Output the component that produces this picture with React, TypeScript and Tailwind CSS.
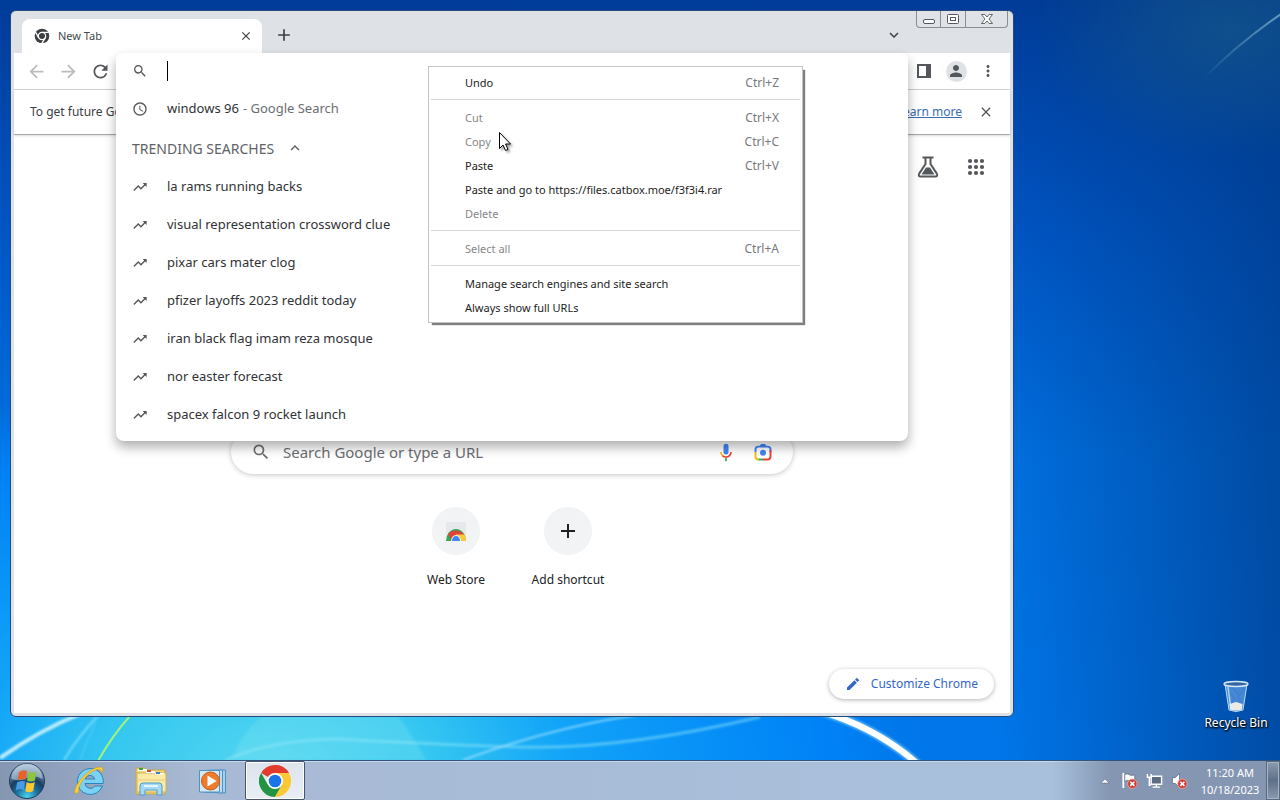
import { ReactNode } from 'react';
import {
  MdAdd,
  MdArrowBack,
  MdArrowForward,
  MdClose,
  MdEdit,
  MdExpandLess,
  MdExpandMore,
  MdMoreVert,
  MdPerson,
  MdRefresh,
  MdSchedule,
  MdSearch,
  MdTrendingUp,
} from 'react-icons/md';

const TRENDING = [
  'la rams running backs',
  'visual representation crossword clue',
  'pixar cars mater clog',
  'pfizer layoffs 2023 reddit today',
  'iran black flag imam reza mosque',
  'nor easter forecast',
  'spacex falcon 9 rocket launch',
];

interface MenuEntry {
  label: string;
  shortcut?: string;
  disabled?: boolean;
}

// One inner array per group, groups are split by a separator line
const MENU: MenuEntry[][] = [
  [{ label: 'Undo', shortcut: 'Ctrl+Z' }],
  [
    { label: 'Cut', shortcut: 'Ctrl+X', disabled: true },
    { label: 'Copy', shortcut: 'Ctrl+C', disabled: true },
    { label: 'Paste', shortcut: 'Ctrl+V' },
    { label: 'Paste and go to https://files.catbox.moe/f3f3i4.rar' },
    { label: 'Delete', disabled: true },
  ],
  [{ label: 'Select all', shortcut: 'Ctrl+A', disabled: true }],
  [{ label: 'Manage search engines and site search' }, { label: 'Always show full URLs' }],
];

function Wallpaper() {
  return (
    <svg className="absolute inset-0 h-full w-full" viewBox="0 0 1280 760" preserveAspectRatio="none" aria-hidden="true">
      <defs>
        <linearGradient id="sky" x1="0" y1="0" x2="0" y2="1">
          <stop offset="0" stopColor="#003b98" />
          <stop offset="0.3" stopColor="#0055c4" />
          <stop offset="0.6" stopColor="#0070e0" />
          <stop offset="1" stopColor="#0076ea" />
        </linearGradient>
        <radialGradient id="glow" gradientUnits="userSpaceOnUse" cx="0" cy="0" r="1" gradientTransform="translate(270 770) scale(660 400)">
          <stop offset="0" stopColor="#54d6f0" />
          <stop offset="0.24" stopColor="#36c8f0" />
          <stop offset="0.45" stopColor="#12a4f8" />
          <stop offset="0.85" stopColor="#0088fc" stopOpacity="0.7" />
          <stop offset="1" stopColor="#0082f4" stopOpacity="0" />
        </radialGradient>
        <linearGradient id="shade" x1="0" y1="0" x2="1" y2="0">
          <stop offset="0.78" stopColor="#003a88" stopOpacity="0" />
          <stop offset="1" stopColor="#003a88" stopOpacity="0.7" />
        </linearGradient>
        <radialGradient id="teal" gradientUnits="userSpaceOnUse" cx="0" cy="0" r="1" gradientTransform="translate(1230 30) scale(200 130)">
          <stop offset="0" stopColor="#1a5c88" stopOpacity="0.6" />
          <stop offset="1" stopColor="#1a5c88" stopOpacity="0" />
        </radialGradient>
        <linearGradient id="ray" x1="1" y1="0" x2="0" y2="1">
          <stop offset="0" stopColor="#6fa4c8" stopOpacity="0.9" />
          <stop offset="1" stopColor="#6fa4c8" stopOpacity="0" />
        </linearGradient>
        <filter id="soft" x="-20%" y="-20%" width="140%" height="140%">
          <feGaussianBlur stdDeviation="1" />
        </filter>
      </defs>
      <rect width="1280" height="760" fill="url(#sky)" />
      <rect width="1280" height="760" fill="url(#glow)" />
      <rect width="1280" height="760" fill="url(#shade)" />
      <rect width="1280" height="760" fill="url(#teal)" />
      <path d="M1204 78 Q1240 42 1281 14" fill="none" stroke="url(#ray)" strokeWidth="2" />
      <g fill="none" filter="url(#soft)">
        <path d="M0 758 Q40 730 80 714" stroke="#bdeeff" strokeWidth="4" />
        <path d="M64 760 Q80 734 98 716" stroke="#6fdcff" strokeWidth="2" />
        <path d="M80 760 Q88 738 96 722" stroke="#5cd0fa" strokeWidth="1" />
        <path d="M226 760 Q270 740 340 739 Q420 744 520 747 T760 717" stroke="#8be6fa" strokeWidth="3" opacity="0.5" />
        <path d="M463 760 Q550 728 636 715" stroke="#8fdcff" strokeWidth="2" opacity="0.8" />
        <path d="M232 760 Q238 738 262 716 H398 Q414 738 426 760 Z" fill="#9df0f4" opacity="0.2" />
      </g>
      <path d="M98 761 Q112 736 130 716" fill="none" stroke="#9cf57c" strokeWidth="2" />
      <path d="M820 711 Q878 728 920 766" fill="none" stroke="#a8e4ff" strokeWidth="9" opacity="0.6" filter="url(#soft)" />
      <path d="M820 711 Q878 728 920 766" fill="none" stroke="#fff" strokeWidth="6" />
    </svg>
  );
}

function ChromeLogo({ className }: { className: string }) {
  return (
    <svg className={className} viewBox="0 0 48 48" aria-hidden="true">
      <path d="M24 24 3.2 12A24 24 0 0 1 44.8 12L24 12Z" fill="#e33b2e" />
      <path d="M24 0A24 24 0 0 1 44.8 12H24Z" fill="#e33b2e" />
      <path d="M3.2 12A24 24 0 0 0 24 48L34.4 30 24 24 13.6 30Z" fill="#229342" />
      <path d="M44.8 12A24 24 0 0 1 24 48L34.4 30 24 12Z" fill="#fcc934" />
      <circle cx="24" cy="24" r="12" fill="#fff" />
      <circle cx="24" cy="24" r="9.5" fill="#1a73e8" />
    </svg>
  );
}

function GreyChromeLogo() {
  return (
    <svg className="size-4" viewBox="0 0 48 48" aria-hidden="true">
      <circle cx="24" cy="24" r="22" fill="#3c4043" />
      <g stroke="#fff" strokeWidth="4" fill="none">
        <path d="M24 13H46M14.5 29.5 3.5 10.5M33.5 29.5 22.5 48.5" />
        <circle cx="24" cy="24" r="11" />
      </g>
      <circle cx="24" cy="24" r="6.5" fill="#3c4043" />
    </svg>
  );
}

function IconButton({ label, children, className = '' }: { label: string; children: ReactNode; className?: string }) {
  return (
    <button aria-label={label} className={`flex size-7 shrink-0 items-center justify-center rounded-full text-[#54575b] ${className}`}>
      {children}
    </button>
  );
}

function WindowControls() {
  return (
    <div className="mr-0.5 flex h-[17px] rounded-b border border-t-0 border-[#8b8e93] bg-[#dfe2e6] text-[#54585e]">
      <button aria-label="Minimize" className="flex w-6 items-center justify-center border-r border-[#8b8e93]">
        <svg className="h-3 w-3.5" viewBox="0 0 14 12" fill="#fff" stroke="currentColor">
          <rect x="1.5" y="6.5" width="11" height="4" rx="1.5" />
        </svg>
      </button>
      <button aria-label="Restore" className="flex w-[25px] items-center justify-center border-r border-[#8b8e93]">
        <svg className="h-3 w-3.5" viewBox="0 0 14 12" fill="#fff" stroke="currentColor">
          <rect x="1.5" y="1.5" width="11" height="9" rx="1" />
          <rect x="4.5" y="4.5" width="5" height="3" />
        </svg>
      </button>
      <button aria-label="Close window" className="flex w-[41px] items-center justify-center">
        <svg className="h-3 w-3.5" viewBox="0 0 14 12" fill="#fff" stroke="currentColor" strokeWidth="0.9">
          <path d="M1.5 1.5H4.8L7 4 9.2 1.5H12.5L9 6 12.5 10.5H9.2L7 8 4.8 10.5H1.5L5 6Z" />
        </svg>
      </button>
    </div>
  );
}

function TitleBar() {
  return (
    <div className="flex h-[42px] shrink-0 items-start">
      <div className="flex min-w-0 flex-1 items-end self-stretch pl-2">
        <div className="flex h-[34px] w-60 items-center rounded-t-lg bg-white pr-2 pl-3">
          <GreyChromeLogo />
          <span className="flex-1 pl-2 text-[11px] text-[#45494d]">New Tab</span>
          <button aria-label="Close tab" className="flex size-4 items-center justify-center text-[#3c4043]">
            <MdClose className="size-3.5" />
          </button>
        </div>
        <IconButton label="New tab" className="mb-1 ml-2">
          <MdAdd className="size-5 text-[#3c4043]" />
        </IconButton>
        <IconButton label="Search tabs" className="mr-2 mb-1 ml-auto">
          <MdExpandMore className="size-[18px] text-[#3c4043]" />
        </IconButton>
      </div>
      <WindowControls />
    </div>
  );
}

function Toolbar() {
  return (
    <div className="flex h-[37px] shrink-0 items-center gap-1 border-b border-[#d0d2d4] bg-white px-2">
      <IconButton label="Back">
        <MdArrowBack className="size-[21px] text-[#b9bbbe]" />
      </IconButton>
      <IconButton label="Forward">
        <MdArrowForward className="size-[21px] text-[#b9bbbe]" />
      </IconButton>
      <IconButton label="Reload">
        <MdRefresh className="size-[21px]" />
      </IconButton>
      <div className="flex-1" />
      <IconButton label="Side panel">
        <svg className="size-4" viewBox="0 0 16 16" fill="none" stroke="currentColor" strokeWidth="2">
          <rect x="2" y="2" width="12" height="12" />
          <path d="M12 2V14" strokeWidth="4" />
        </svg>
      </IconButton>
      <IconButton label="Profile">
        <span className="flex size-[21px] items-center justify-center rounded-full bg-[#dee1e6]">
          <MdPerson className="size-[18px]" />
        </span>
      </IconButton>
      <IconButton label="Menu">
        <MdMoreVert className="size-[18px]" />
      </IconButton>
    </div>
  );
}

function InfoBar() {
  return (
    <div className="z-10 flex h-[45px] shrink-0 items-center border-b border-[#a8a8a8] bg-white px-4 text-[12px] text-[#3c4043] shadow">
      <span>To get future Google</span>
      <a href="#learn" className="ml-auto shrink-0 text-[#3a6cae] underline">
        Learn more
      </a>
      <button aria-label="Dismiss" className="ml-4 text-[#54575b]">
        <MdClose className="size-4" />
      </button>
    </div>
  );
}

function MicIcon() {
  return (
    <svg className="size-5" viewBox="0 0 24 24" aria-hidden="true">
      <path d="M12 15a3 3 0 0 0 3-3V5a3 3 0 0 0-6 0v7a3 3 0 0 0 3 3Z" fill="#4285f4" />
      <path d="M11 18.9h2V23h-2Z" fill="#34a853" />
      <path d="M7 12H5c0 1.9.8 3.7 2 5l1.5-1.4A5 5 0 0 1 7 12Z" fill="#fbbc04" />
      <path d="M12 17a5 5 0 0 1-3.6-1.5L7 17a7 7 0 0 0 5 2c3.9 0 7-3.1 7-7h-2a5 5 0 0 1-5 5Z" fill="#ea4335" />
    </svg>
  );
}

function LensIcon() {
  return (
    <svg className="size-5" viewBox="0 0 24 24" fill="none" strokeWidth="2.3" aria-hidden="true">
      <path d="M3 12V9a3.5 3.5 0 0 1 3.5-3.5H17.5A3.5 3.5 0 0 1 21 9V12" stroke="#4285f4" />
      <path d="M8 5 9.5 2.5H14.5L16 5Z" fill="#4285f4" />
      <path d="M21 10V17.5a3.5 3.5 0 0 1-3.5 3.5H12" stroke="#ea4335" />
      <path d="M3 12V17.5A3.5 3.5 0 0 0 6.5 21" stroke="#fbbc04" />
      <path d="M6.5 21H12" stroke="#34a853" />
      <circle cx="12" cy="13" r="3.6" fill="#4285f4" />
    </svg>
  );
}

function Shortcut({ label, children }: { label: string; children: ReactNode }) {
  return (
    <button className="flex w-28 flex-col items-center gap-[17px] text-[12px] text-[#202124]">
      <span className="flex size-12 items-center justify-center rounded-full bg-[#f1f3f4]">{children}</span>
      <span className="leading-4">{label}</span>
    </button>
  );
}

function NewTabPage() {
  return (
    <main className="flex min-h-0 flex-1 flex-col items-center bg-white">
      <div className="flex h-16 items-center gap-2 self-end pr-3.5 text-[#54575b]">
        <button aria-label="Search Labs" className="flex size-10 items-center justify-center">
          <svg className="size-6" viewBox="0 0 24 24" fill="none" stroke="currentColor" strokeWidth="2">
            <path d="M6.5 2.5H17.5M9.5 3V9L3.2 18.6C2.2 20.5 3 21.5 4.6 21.5H19.4C21 21.5 21.8 20.5 20.8 18.6L14.5 9V3" />
            <path d="M10 12.5H14L18.5 19.5H5.5Z" fill="currentColor" stroke="none" />
          </svg>
        </button>
        <button aria-label="Google apps" className="flex size-10 items-center justify-center">
          <svg className="size-6" viewBox="0 0 24 24" fill="currentColor">
            {[6, 12, 18].map((y) => [6, 12, 18].map((x) => <circle key={`${x}-${y}`} cx={x} cy={y} r="2.1" />))}
          </svg>
        </button>
      </div>
      <label className="mt-[231px] flex h-11 w-full max-w-[562px] items-center rounded-full bg-white px-5 shadow-[0_1px_5px_rgba(32,33,36,0.25)]">
        <MdSearch className="size-5 text-[#6b6e72]" />
        <input
          aria-label="Search Google or type a URL"
          placeholder="Search Google or type a URL"
          className="ml-3 min-w-0 flex-1 text-[15px] outline-none placeholder:text-[#6b6e72]"
        />
        <MicIcon />
        <span className="ml-[17px]">
          <LensIcon />
        </span>
      </label>
      <div className="mt-[33px] flex">
        <Shortcut label="Web Store">
          <svg className="size-6" viewBox="0 0 24 24" aria-hidden="true">
            <path d="M2 3H22V19H2Z" fill="#e6e8eb" />
            <path d="M2 22a10 12 0 0 1 20 0Z" fill="#34a853" />
            <path d="M4 15a10 9 0 0 1 16.5 1L12 17 8 22Z" fill="#db4437" />
            <path d="M12 15.5H20.3A10 12 0 0 1 22 22H12Z" fill="#fbc934" />
            <path d="M7 22a5 6 0 0 1 10 0Z" fill="#f1f3f4" />
            <path d="M8 22a4 5 0 0 1 8 0Z" fill="#4285f4" />
          </svg>
        </Shortcut>
        <Shortcut label="Add shortcut">
          <MdAdd className="size-6" />
        </Shortcut>
      </div>
      <button className="mt-auto mr-4 mb-3.5 flex h-[30px] items-center gap-2.5 self-end rounded-full bg-white px-4 text-[12px] text-[#3367c8] shadow-[0_1px_4px_rgba(60,64,67,0.4)]">
        <MdEdit className="size-4" />
        Customize Chrome
      </button>
    </main>
  );
}

function Omnibox() {
  return (
    <div className="absolute top-[42px] right-[105px] left-[105px] z-20 overflow-hidden rounded-lg bg-white pb-2 text-[13px] text-[#303235] shadow-[0_6px_12px_rgba(0,0,0,0.32)]">
      <div className="flex h-9 items-center pl-4">
        <MdSearch className="size-4 text-[#54575b]" />
        <span className="ml-[19px] h-5 w-px bg-black" />
        <input aria-label="Address and search bar" autoComplete="off" className="min-w-0 flex-1 outline-none" />
      </div>
      <button className="flex h-[38px] w-full items-center pt-0.5 pl-4 text-left">
        <MdSchedule className="mr-[19px] size-4 text-[#54575b]" />
        <span>windows 96</span>
        <span className="ml-1 text-[#6b6e72]">- Google Search</span>
      </button>
      <button className="flex h-10 w-full items-center gap-3 pt-0.5 pl-4 text-[14px] text-[#5f6368]">
        TRENDING SEARCHES
        <MdExpandLess className="size-[18px]" />
      </button>
      {TRENDING.map((text) => (
        <button key={text} className="flex h-[38px] w-full items-center pt-0.5 pl-4 text-left">
          <MdTrendingUp className="mr-[19px] size-4 text-[#54575b]" />
          <span>{text}</span>
        </button>
      ))}
    </div>
  );
}

function ContextMenu() {
  return (
    <div className="absolute top-[66px] left-[428px] z-30 w-[375px] border border-[#c4c4c4] bg-white px-0.5 pt-1 pb-0.5 text-[#1d1d1d] shadow-[3px_3px_1px_-1px_rgba(0,0,0,0.5)]">
      {MENU.map((group, i) => (
        <div key={i}>
          {i > 0 && <hr className="mt-1 mb-1.5 border-[#d5d5d5]" />}
          {group.map((item) => (
            <button
              key={item.label}
              disabled={item.disabled}
              className="flex h-6 w-full items-center justify-between pr-[21px] pl-[34px] text-[11px] disabled:text-[#85878a]"
            >
              <span>{item.label}</span>
              {item.shortcut && <span className="text-[12px] text-[#77797c]">{item.shortcut}</span>}
            </button>
          ))}
        </div>
      ))}
    </div>
  );
}

function Cursor() {
  return (
    <svg className="absolute top-[131px] left-[498px] z-40 h-[21px] w-[15px] drop-shadow-[2px_2px_1px_rgba(0,0,0,0.35)]" viewBox="0 0 15 21" aria-hidden="true">
      <path d="M1.5 1.5V17.5L5 14L7.5 19.5L10 18.4L7.6 13H12.5Z" fill="#fff" stroke="#000" />
    </svg>
  );
}

function RecycleBin() {
  return (
    <button className="absolute right-1 bottom-7 flex w-20 flex-col items-center text-[12px] text-white [text-shadow:0_1px_2px_#000,1px_1px_2px_#000]">
      <svg className="h-9 w-8" viewBox="0 0 32 36" aria-hidden="true">
        <path d="M5 6 9 32Q16 35 23 32L27 6Z" fill="#5f9be0" fillOpacity="0.75" stroke="#b9dbf8" />
        <path d="M9.5 26 16 24 22.5 26 22 31.5Q16 33.5 10 31.5Z" fill="#ecece6" />
        <path d="M8 12 14 20 11 25M24 11 18 19 22 25M13 10 19 17" fill="none" stroke="#3c7fd0" strokeWidth="1.2" />
        <ellipse cx="16" cy="6" rx="12" ry="2.5" fill="#34679f" stroke="#d4e8f6" strokeWidth="1.5" />
        <path d="M8 9 11 31" stroke="#e0f1ff" strokeWidth="1.5" opacity="0.7" />
      </svg>
      <span className="whitespace-nowrap">Recycle Bin</span>
    </button>
  );
}

function StartOrb() {
  return (
    <svg className="size-[38px]" viewBox="0 0 38 38" aria-hidden="true">
      <defs>
        <radialGradient id="orb" cx="0.5" cy="0.95" r="0.9">
          <stop offset="0" stopColor="#4cd4ee" />
          <stop offset="0.35" stopColor="#1b6fa0" />
          <stop offset="0.6" stopColor="#1a3d63" />
          <stop offset="1" stopColor="#9fb8cf" />
        </radialGradient>
      </defs>
      <circle cx="19" cy="19" r="17.5" fill="url(#orb)" stroke="#223c58" />
      <path d="M3.5 17A15.5 15.5 0 0 1 34.5 17Q26 12 19 16T3.5 17Z" fill="#c8dbea" opacity="0.55" />
      <path d="M11 10Q15 7 19 9L17.5 18Q13 16 9.5 18.5Z" fill="#e8622a" />
      <path d="M20.5 9.5Q24 12 28.5 9.5L27 18.5Q23 20.5 19 18.5Z" fill="#8cc63f" />
      <path d="M9 20.5Q13 18 17 19.5L15.8 28Q12 26 7.8 28.5Z" fill="#4a9be6" />
      <path d="M18.7 20Q22.5 22.5 26.8 20L25.2 29Q21 31.5 17.3 29Z" fill="#fdc72f" />
    </svg>
  );
}

function InternetExplorerIcon() {
  return (
    <svg className="size-8" viewBox="0 0 32 32" aria-hidden="true">
      <path
        d="M17 3.5A13 13 0 1 0 29.5 21H22A5.5 5.5 0 0 1 12 18.5H30.2A13 13 0 0 0 17 3.5ZM12.2 14A5 5 0 0 1 21.8 14Z"
        fill="#7cd2f2"
        stroke="#2a84bd"
      />
      <path d="M6 27C-1 32 1 22 9 13S27 0 29.5 3C30.5 4.5 29.5 7 28.5 8.5C29 4 25 3 18 7.5S4 22 6 27Z" fill="#fcd03c" stroke="#c99a18" strokeWidth="0.6" />
    </svg>
  );
}

function ExplorerIcon() {
  return (
    <svg className="size-8" viewBox="0 0 32 32" aria-hidden="true">
      <path d="M1 3H10L12 5H30V29H1Z" fill="#efd779" stroke="#c7a547" />
      <path d="M2 8H31V27H2Z" fill="#faeaa6" stroke="#d0b25a" />
      <path d="M3 4H12V6H3ZM11 6H20V8H11ZM20 8H29V9.5H20Z" fill="#fff" />
      <path d="M4 3H8V5H4Z" fill="#3fa14a" />
      <path d="M12 5H16V7H12Z" fill="#d54a35" />
      <path d="M21 7H25V9H21Z" fill="#3c80c8" />
      <path d="M3 15H30" stroke="#e3cc80" />
      <path d="M5 30V21Q5 18 8 18H24Q27 18 27 21V30H22V25H10V30Z" fill="#a5d8f2" stroke="#4c9dcc" />
      <path d="M9 21H23" stroke="#e3f5ff" strokeWidth="2" />
    </svg>
  );
}

function MediaPlayerIcon() {
  return (
    <svg className="h-7 w-8" viewBox="0 0 32 28" aria-hidden="true">
      <path d="M9 3.5 28.5 3V26L9 25Z" fill="#a8d0ea" stroke="#4e93c4" />
      <path d="M6 3.5 25.5 3V26L6 25Z" fill="#bcdcf0" stroke="#4e93c4" />
      <path d="M2.5 3.5H22.5V25H2.5Z" fill="#d4e9f6" stroke="#4e93c4" />
      <circle cx="13.5" cy="14" r="9" fill="#ef7c2c" stroke="#c85c14" />
      <path d="M10.5 8.5V19.5L19.5 14Z" fill="#fff" />
    </svg>
  );
}

function TaskButton({ label, active = false, children }: { label: string; active?: boolean; children: ReactNode }) {
  return (
    <button
      aria-label={label}
      className={`flex w-[60px] items-center justify-center ${
        active ? 'rounded-xs border border-[#46566c] bg-linear-to-b from-[#dde4ec] to-[#e9eef5] shadow-[inset_0_0_0_1px_#fff]' : ''
      }`}
    >
      {children}
    </button>
  );
}

function RedCross() {
  return (
    <g>
      <circle cx="12" cy="12.5" r="5" fill="#d23a30" stroke="#f2b3ac" strokeWidth="0.8" />
      <path d="M9.8 10.3 14.2 14.7M14.2 10.3 9.8 14.7" stroke="#fff" strokeWidth="1.8" />
    </g>
  );
}

function Taskbar() {
  return (
    <footer className="relative z-10 flex h-10 shrink-0 border-t border-[#33557d] bg-linear-to-r from-[#8496b2] from-0% via-[#a8b9d4] via-15% to-[#a8c2de] shadow-[inset_0_1px_0_#c5d8ec]">
      <button aria-label="Start" className="flex w-[54px] items-center justify-center">
        <StartOrb />
      </button>
      <div className="ml-[5px] flex gap-0.5">
        <TaskButton label="Internet Explorer">
          <InternetExplorerIcon />
        </TaskButton>
        <TaskButton label="Windows Explorer">
          <ExplorerIcon />
        </TaskButton>
        <TaskButton label="Windows Media Player">
          <MediaPlayerIcon />
        </TaskButton>
        <TaskButton label="Google Chrome" active>
          <ChromeLogo className="size-8" />
        </TaskButton>
      </div>
      <div className="ml-auto flex items-center bg-linear-to-r from-transparent to-[#8496b2] to-25% pl-10">
        <button aria-label="Show hidden icons" className="flex w-6 justify-center">
          <svg className="h-2 w-2.5" viewBox="0 0 10 8">
            <path d="M1 6H9L5 2Z" fill="#fff" stroke="#55657c" strokeWidth="0.5" />
          </svg>
        </button>
        <div className="ml-1 flex gap-2">
          <svg className="size-[17px]" viewBox="0 0 18 18" role="img" aria-label="Action Center">
            <path d="M2.5 1V17" stroke="#fff" strokeWidth="2" />
            <path d="M4 2.5Q7 1.5 9 3T14.5 3V10Q11 11 9 9.5T4 10Z" fill="#fff" stroke="#44536a" strokeWidth="0.6" />
            <RedCross />
          </svg>
          <svg className="size-[17px]" viewBox="0 0 18 18" role="img" aria-label="Network">
            <path d="M5.5 4.5H16.5V13H5.5Z" fill="#5b6b84" stroke="#fff" strokeWidth="1.5" />
            <path d="M11 13V15.5M7 16H15" stroke="#fff" strokeWidth="1.5" />
            <path d="M1.5 2V5.5H5.5V2M3.5 5.5V14H5" fill="none" stroke="#fff" strokeWidth="1.5" />
          </svg>
          <svg className="size-[17px]" viewBox="0 0 18 18" role="img" aria-label="Volume">
            <path d="M1.5 6H4.5L9 1.5V16.5L4.5 12H1.5Z" fill="#fff" stroke="#44536a" strokeWidth="0.6" />
            <RedCross />
          </svg>
        </div>
        <time className="ml-3 w-[60px] text-center text-[11px] leading-[17px] whitespace-nowrap text-white">
          11:20 AM
          <br />
          10/18/2023
        </time>
        <button
          aria-label="Show desktop"
          className="ml-1.5 h-full w-3.5 border border-[#586980] bg-linear-to-b from-[#8b9bb0] via-[#5d7088] to-[#8b9bb0] shadow-[inset_0_0_0_1px_#a5b3c4]"
        />
      </div>
    </footer>
  );
}

export default function App() {
  return (
    <div className="flex h-screen flex-col overflow-hidden bg-[#0062d0] font-['Noto_Sans','Open_Sans',sans-serif]">
      <div className="relative min-h-0 flex-1">
        <Wallpaper />
        <section className="absolute top-2.5 right-[266px] bottom-[43px] left-2.5 flex flex-col rounded-md border border-[#24497a] bg-[#dee1e6] px-[3px] pb-[3px]">
          <TitleBar />
          <Toolbar />
          <InfoBar />
          <NewTabPage />
          <Omnibox />
        </section>
        <ContextMenu />
        <Cursor />
        <RecycleBin />
      </div>
      <Taskbar />
    </div>
  );
}
